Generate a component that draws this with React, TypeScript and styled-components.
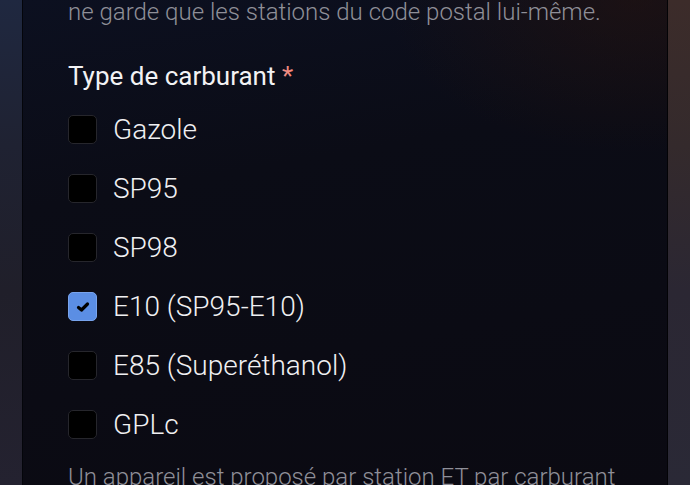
import React, { useState } from 'react'
import styled, { createGlobalStyle } from 'styled-components'

const GlobalStyle = createGlobalStyle`
  html, body {
    margin: 0;
    padding: 0;
    height: 485px;
    overflow: hidden;
    background: #1c1c26;
    font-family: Roboto, "Noto Sans", "Liberation Sans", sans-serif;
  }
`

const fuels = [
  'Gazole',
  'SP95',
  'SP98',
  'E10 (SP95-E10)',
  'E85 (Superéthanol)',
  'GPLc',
]

const App = () => {
  const [checked, setChecked] = useState<string[]>(['E10 (SP95-E10)'])

  const toggle = (fuel: string) => {
    setChecked(c => (c.includes(fuel) ? c.filter(f => f !== fuel) : [...c, fuel]))
  }

  return (
    <Screen>
      <GlobalStyle />
      <SideLeft />
      <Panel>
        <Hint>ne garde que les stations du code postal lui-même.</Hint>
        <Title>
          Type de carburant <Required>*</Required>
        </Title>
        <List>
          {fuels.map(fuel => {
            const on = checked.includes(fuel)
            return (
              <Row key={fuel} onClick={() => toggle(fuel)}>
                <Box $checked={on}>
                  {on && (
                    <svg width="14" height="12" viewBox="0 0 14 12">
                      <polyline
                        points="2.5,6.5 5.5,9 11.5,3"
                        fill="none"
                        stroke="#000"
                        strokeWidth="3.2"
                        strokeLinecap="round"
                        strokeLinejoin="round"
                      />
                    </svg>
                  )}
                </Box>
                <Label>{fuel}</Label>
              </Row>
            )
          })}
        </List>
        <Hint>Un appareil est proposé par station ET par carburant</Hint>
      </Panel>
      <SideRight />
    </Screen>
  )
}

export default App

const Screen = styled.div`
  display: flex;
  flex-direction: row;
  width: 690px;
  height: 485px;
  overflow: hidden;
`
const SideLeft = styled.div`
  width: 22px;
  flex-shrink: 0;
  background: linear-gradient(to bottom, #1f2840 0%, #1f2232 30%, #201f2a 60%, #242230 100%);
`
const SideRight = styled.div`
  width: 22px;
  flex-shrink: 0;
  background: linear-gradient(to bottom, #3c2c2a 0%, #342a2c 30%, #2b2733 60%, #2a2936 100%);
`
const Panel = styled.div`
  flex: 1;
  display: flex;
  flex-direction: column;
  padding: 0 0 0 45px;
  border-left: 1px solid #04050a;
  border-right: 1px solid #030306;
  background:
    radial-gradient(ellipse 55% 45% at 95% 0%, rgba(40, 20, 14, 0.55), transparent 70%),
    linear-gradient(170deg, #0c1020 0%, #0b0c16 35%, #0b0a12 100%);
`
const Hint = styled.p`
  margin: 0;
  font-size: 24px;
  line-height: 32px;
  font-weight: 300;
  color: #8f8f98;
  white-space: nowrap;

  &:first-child {
    margin-top: -4px;
  }
`
const Title = styled.div`
  margin-top: 32px;
  font-size: 26px;
  line-height: 32px;
  font-weight: 400;
  color: #f2f2f4;
`
const Required = styled.span`
  color: #f08a80;
`
const List = styled.div`
  display: flex;
  flex-direction: column;
  margin-top: 8px;
  margin-bottom: 7px;
`
const Row = styled.div`
  display: flex;
  align-items: center;
  gap: 16px;
  height: 59px;
  cursor: pointer;
`
const Box = styled.div<{ $checked: boolean }>`
  width: 29px;
  height: 29px;
  box-sizing: border-box;
  border-radius: 5px;
  display: flex;
  align-items: center;
  justify-content: center;
  background: ${p => (p.$checked ? '#5b8ee4' : '#000')};
  border: 1.5px solid ${p => (p.$checked ? '#78a3ec' : '#26262c')};
`
const Label = styled.span`
  font-size: 28px;
  font-weight: 300;
  color: #f0f0f2;
`
